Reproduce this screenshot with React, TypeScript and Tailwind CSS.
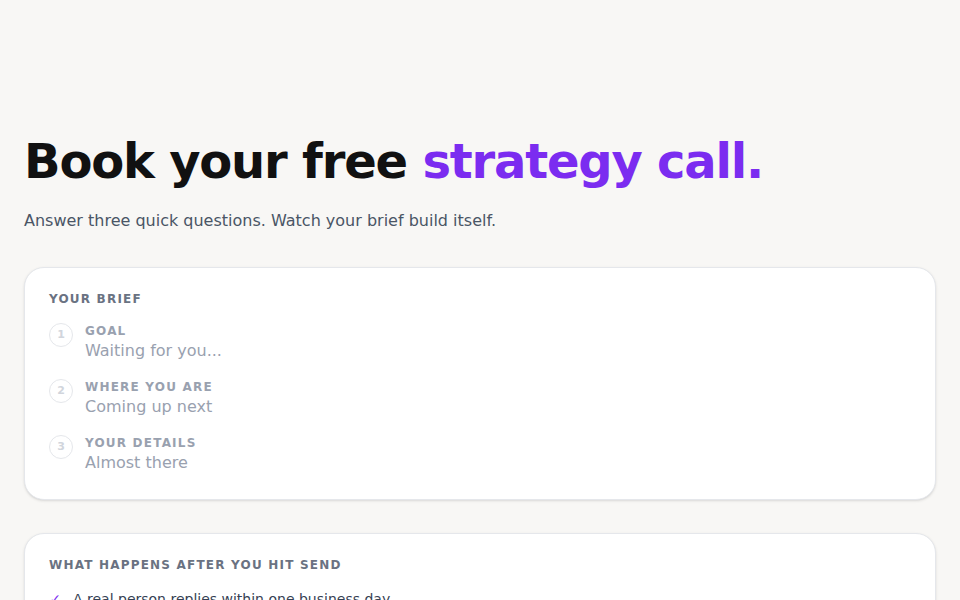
const steps = [
  { n: 1, label: "Goal", value: "Waiting for you..." },
  { n: 2, label: "Where you are", value: "Coming up next" },
  { n: 3, label: "Your details", value: "Almost there" },
];

const afterSend = [
  "A real person replies within one business day",
  "We send a short agenda before the call",
  "No pitch deck, no pressure",
];

export default function App() {
  return (
    <div
      className="min-h-screen bg-[#f8f7f5] px-6 pt-[131px] pb-16"
      style={{ fontFamily: '"DejaVu Sans", Verdana, sans-serif' }}
    >
      <h1 className="text-5xl font-bold leading-tight tracking-tight text-[#111111]">
        Book your free <span className="text-[#7b2cf0]">strategy call.</span>
      </h1>
      <p className="mt-[18px] text-base leading-6 text-gray-600">
        Answer three quick questions. Watch your brief build itself.
      </p>

      {/* brief card */}
      <div className="mt-[34px] rounded-[20px] border border-gray-200 bg-white px-6 pt-[23px] pb-6 shadow-sm">
        <div className="text-xs font-bold uppercase leading-4 tracking-[0.1em] text-gray-500">
          Your brief
        </div>
        <div className="mt-4 flex flex-col gap-4">
          {steps.map((s) => (
            <div key={s.n} className="flex items-start gap-3">
              <div className="flex h-6 w-6 shrink-0 items-center justify-center rounded-full border border-gray-200 text-[11px] font-bold text-gray-300">
                {s.n}
              </div>
              <div>
                <div className="text-xs font-bold uppercase leading-4 tracking-[0.1em] text-gray-400">
                  {s.label}
                </div>
                <div className="text-base leading-6 text-gray-400">{s.value}</div>
              </div>
            </div>
          ))}
        </div>
      </div>

      {/* after send card */}
      <div className="mt-[33px] rounded-[20px] border border-gray-200 bg-white px-6 pt-[23px] pb-6 shadow-sm">
        <div className="text-xs font-bold uppercase leading-4 tracking-[0.1em] text-gray-500">
          What happens after you hit send
        </div>
        <ul className="mt-4 flex flex-col gap-2">
          {afterSend.map((t) => (
            <li key={t} className="flex items-center gap-3 text-sm leading-5 text-gray-700">
              <span className="w-3 text-center text-[#7b2cf0]">✓</span>
              <span>{t}</span>
            </li>
          ))}
        </ul>
      </div>
    </div>
  );
}
